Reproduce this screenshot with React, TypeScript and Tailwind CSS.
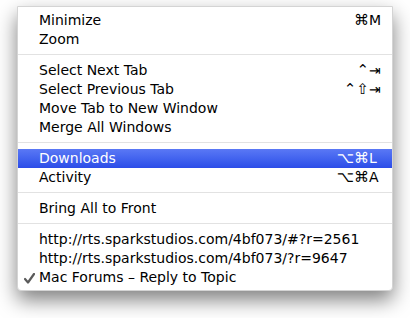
import React from 'react'

type Item = {
  label: string
  mods?: string
  keyChar?: string
  highlighted?: boolean
  checked?: boolean
}

const groups: Item[][] = [
  [
    { label: 'Minimize', mods: '⌘', keyChar: 'M' },
    { label: 'Zoom' }
  ],
  [
    { label: 'Select Next Tab', mods: '⌃', keyChar: '⇥' },
    { label: 'Select Previous Tab', mods: '⌃⇧', keyChar: '⇥' },
    { label: 'Move Tab to New Window' },
    { label: 'Merge All Windows' }
  ],
  [
    { label: 'Downloads', mods: '⌥⌘', keyChar: 'L', highlighted: true },
    { label: 'Activity', mods: '⌥⌘', keyChar: 'A' }
  ],
  [{ label: 'Bring All to Front' }],
  [
    { label: 'http://rts.sparkstudios.com/4bf073/#?r=2561' },
    { label: 'http://rts.sparkstudios.com/4bf073/?r=9647' },
    { label: 'Mac Forums – Reply to Topic', checked: true }
  ]
]

function Check(): JSX.Element {
  return (
    <svg width="11" height="11" viewBox="0 0 11 11" className="absolute left-[6px] top-[5px]">
      <path d="M1 6 L4 9.5 L10 1" fill="none" stroke="#5a5a5a" strokeWidth="2.2" strokeLinecap="round" strokeLinejoin="round" />
    </svg>
  )
}

function Row({ item }: { item: Item }): JSX.Element {
  const hl = item.highlighted
  return (
    <div
      className={`relative flex h-[19px] items-center pl-[21px] pr-[10px] ${
        hl ? 'bg-gradient-to-b from-[#5a78f5] to-[#2c4ce8] text-white' : 'text-black'
      }`}
    >
      {item.checked && <Check />}
      <span className="flex-1 whitespace-nowrap">{item.label}</span>
      {item.keyChar && (
        <span className="flex items-center">
          <span className="text-right text-[15px]">{item.mods}</span>
          <span className="w-[13px] text-left">{item.keyChar}</span>
        </span>
      )}
    </div>
  )
}

export default function App(): JSX.Element {
  return (
    <div className="h-[318px] w-[410px] bg-white pl-[17px] pt-[6px]" style={{ fontFamily: '"DejaVu Sans", sans-serif' }}>
      <div className="w-[376px] rounded-b-[4px] border border-[#d4d4d4] bg-white pb-[3px] pt-[4px] text-[14px] leading-[19px] shadow-[0_9px_20px_rgba(0,0,0,0.5)]">
        {groups.map((group, gi) => (
          <div key={gi}>
            {gi > 0 && <div className="mb-[6px] mt-[5px] h-px bg-[#e2e2e2]" />}
            {group.map((item) => (
              <Row key={item.label} item={item} />
            ))}
          </div>
        ))}
      </div>
    </div>
  )
}
